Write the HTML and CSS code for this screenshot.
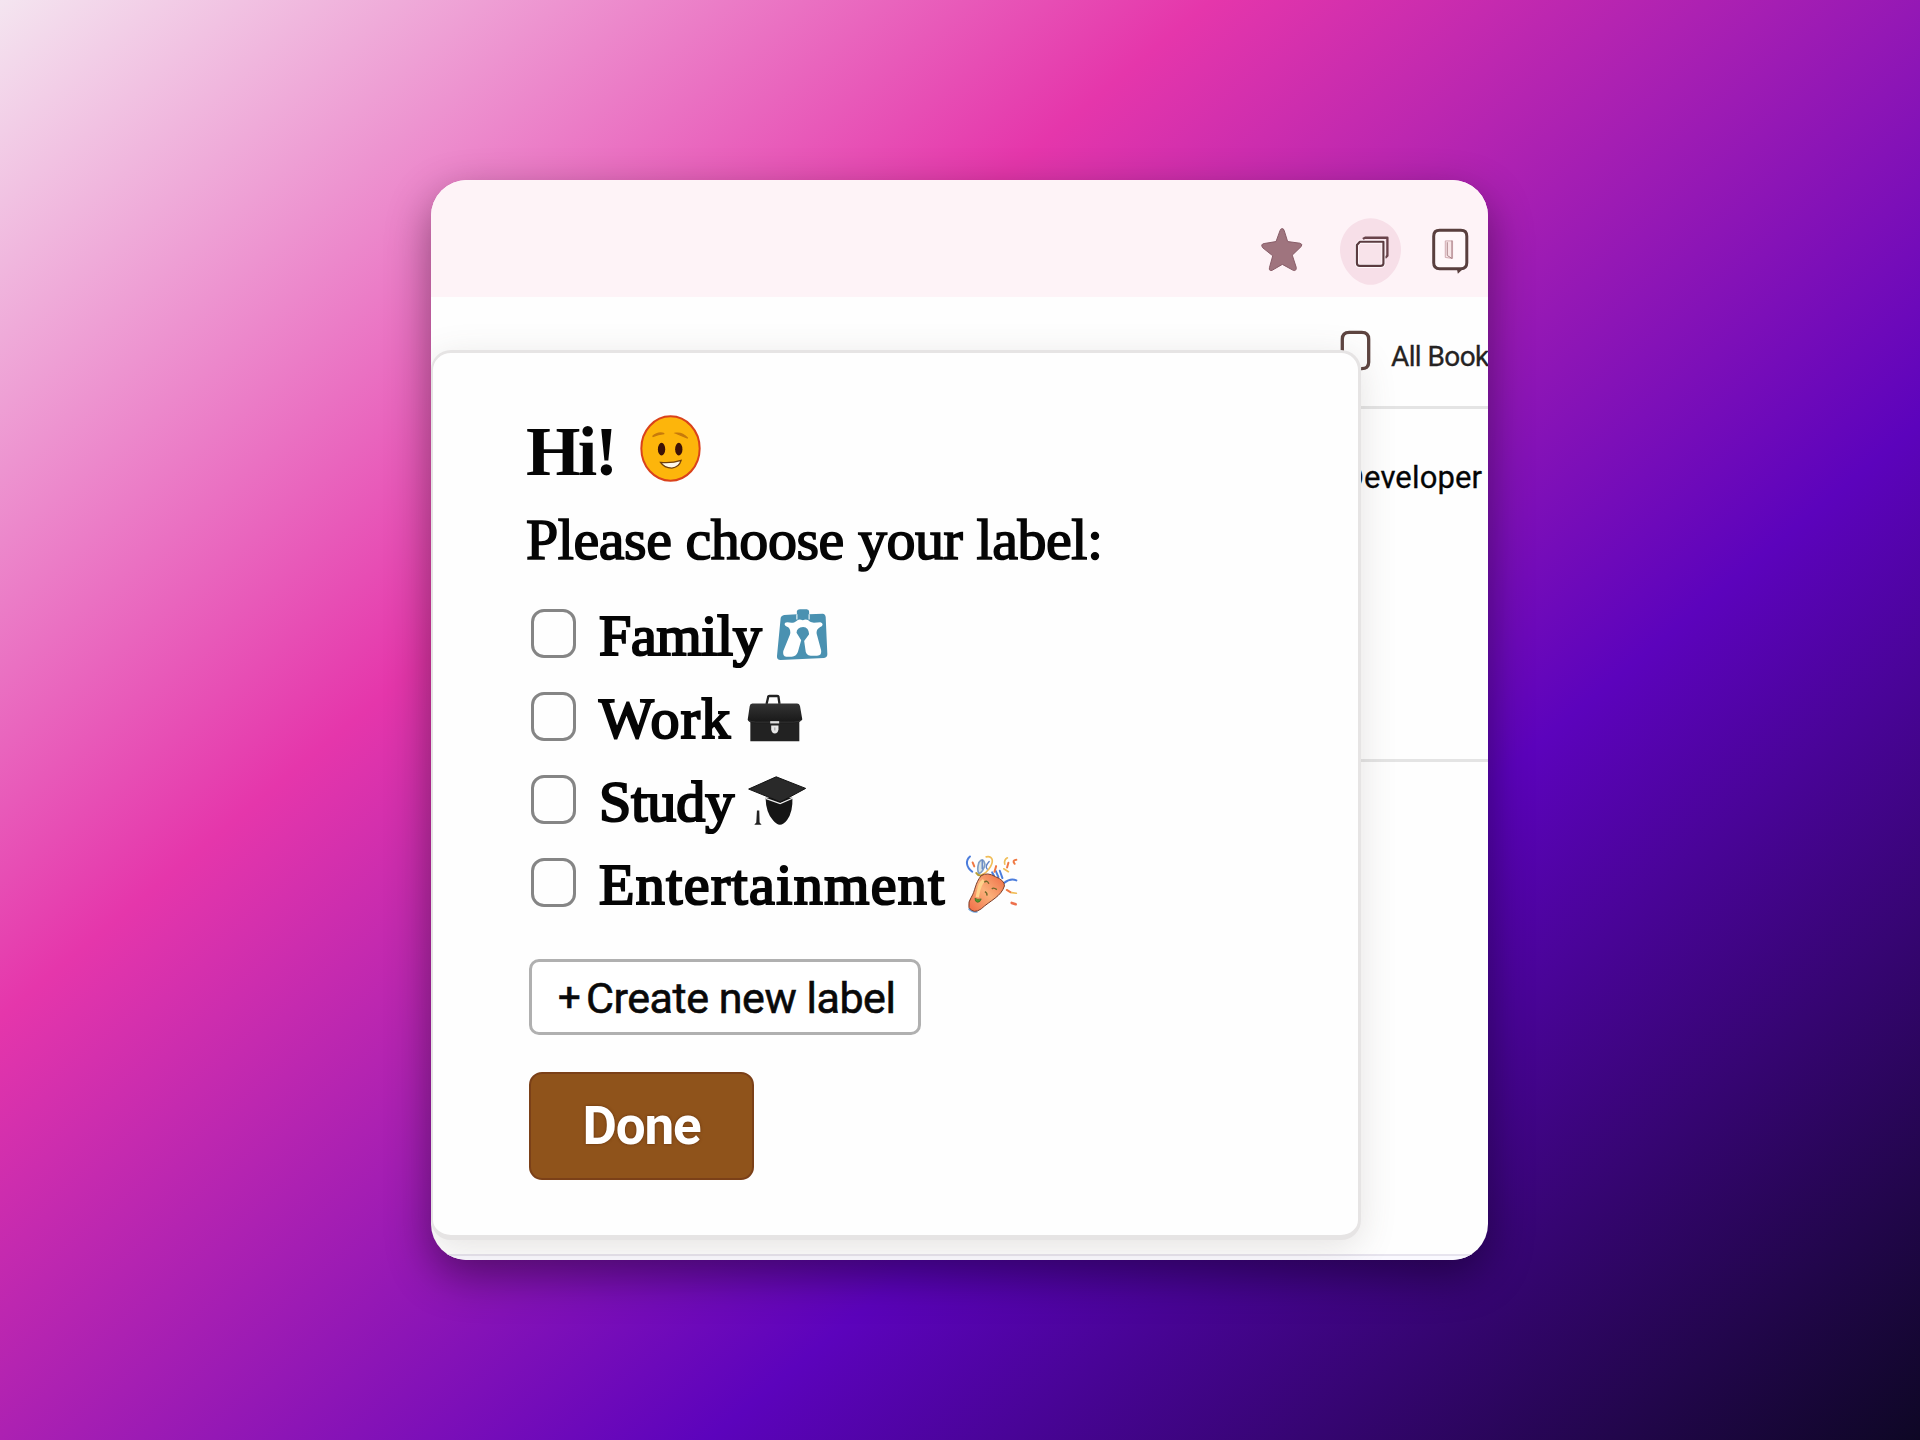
FILE: index.html
```html
<!DOCTYPE html>
<html lang="en">
<head>
<meta charset="utf-8">
<title>Choose your label</title>
<link rel="stylesheet" href="styles.css">
</head>
<body>
<main class="window">
  <header class="toolbar">
    <svg class="star" viewBox="121 172 126 136"><path d="M184 177Q189 176 191 184L201 216L238 221Q248 224 242 231L215 257L227 294Q228 306 218 303L185 285L154 303Q144 306 146 295L156 259L126 235Q118 224 130 222L166 216L178 183Q180 177 184 177Z" fill="#9f747e" stroke="#875c67" stroke-width="3"/></svg>
    <svg class="tabs" viewBox="360 145 184 201"><path d="M452 145C505 147 544 188 544 240C544 292 500 346 452 346C404 346 360 292 360 240C360 188 400 147 452 145Z" fill="#f7dfe8"/><g fill="none" stroke-linejoin="round"><path d="M429 208L436 204H503V258L496 265" stroke="#69434a" stroke-width="7"/><path d="M411 226L420 216H491V282Q490 289 482 289H420Q411 289 411 280Z" fill="#f8e3ea" stroke="#fff8fb" stroke-width="12"/><path d="M411 226L420 216H491V282Q490 289 482 289H420Q411 289 411 280Z" stroke="#5b3b40" stroke-width="6.5"/></g></svg>
    <svg class="bubble" viewBox="635 173 110 139"><path d="M658 180H722Q740 180 740 198V278L727 293L714 308V296H658Q640 296 640 278V198Q640 180 658 180Z" fill="#fff8fa"/><path d="M658 180H722Q740 180 740 198V278Q740 296 722 296H658Q640 296 640 278V198Q640 180 658 180Z" fill="none" stroke="#593f3e" stroke-width="9"/><path d="M710 296H726L738 288L713 311Z" fill="#593f3e"/><path d="M675 212H697V265L675 262Z" fill="#f8e6e8" stroke="#d1aab0" stroke-width="3"/><path d="M681 216V256L695 265V211" fill="none" stroke="#a98488" stroke-width="3"/></svg>
  </header>
  <div class="bookmarks">
    <svg class="folder" viewBox="358 480 94 124"><path d="M365 545V508Q365 487 386 487H424Q445 487 445 508V578Q445 598 422 597" fill="none" stroke="#5e4541" stroke-width="10"/></svg>
    <span class="bookmarks-text">All Book</span>
  </div>
  <div class="content"><span class="developer">Developer</span></div>
  <div class="content-lower"></div>
  <div class="bottom-edge"></div>

  <section class="popup">
    <h1 class="greeting"><span class="hi">Hi!</span>
      <svg class="face" viewBox="388 71 184 202"><ellipse cx="480" cy="172" rx="88" ry="97" fill="#fdb50b" stroke="#da421b" stroke-width="6"/><g fill="#3b1207"><ellipse cx="453" cy="174" rx="11" ry="19"/><ellipse cx="505" cy="174" rx="11" ry="19"/></g><path d="M426 136Q442 121 461 127Q443 129 426 136ZM496 126Q515 123 532 141Q512 133 496 126Z" fill="#c77a0b" stroke="#c77a0b" stroke-width="4"/><path d="M450 214Q484 217 512 208Q506 229 484 231Q461 231 450 214Z" fill="#fff9e8" stroke="#70400b" stroke-width="4"/></svg>
    </h1>
    <p class="prompt">Please choose your label:</p>
    <ul class="labels">
      <li class="label-row"><span class="box"></span><span class="name family">Family</span>
        <svg class="icon-family" viewBox="798 52 157 158"><path d="M823 72L861 70V60Q863 55 870 55H891Q898 56 898 62V70L939 68Q947 69 948 78L953 191Q953 201 943 202L812 208Q800 208 801 196L812 82Q813 74 823 72Z" fill="#4a91b1"/><path d="M861 70V86M898 70V86" stroke="#d7eaf1" stroke-width="4"/><path d="M835 109C820 104 822 94 832 94C843 96 852 97 860 90Q866 82 879 88Q892 82 900 92C909 98 920 94 932 94Q943 98 936 106C923 112 918 120 922 133L934 178Q938 196 920 195H903Q887 194 887 178L883 151L898 130Q897 109 880 108Q860 109 860 126L874 148L864 184Q858 199 844 198H829Q817 197 820 181L840 132Q844 117 835 109Z" fill="#fff"/></svg></li>
      <li class="label-row"><span class="box"></span><span class="name work">Work</span>
        <svg class="icon-work" viewBox="710 308 167 145"><defs><linearGradient id="leather" x2="0" y2="1"><stop stop-color="#343434"/><stop offset="1" stop-color="#171717"/></linearGradient></defs><path d="M768 338L773 317Q773 314 777 314H800Q804 314 804 317L807 338" fill="none" stroke="#222" stroke-width="7"/><path d="M719 386H867V451H719Z" fill="#222"/><path d="M725 337H860Q867 337 869 344L876 385Q868 396 850 396H731Q714 395 711 386L717 345Q718 337 725 337Z" fill="url(#leather)"/><path d="M714 388Q722 393 735 393H850Q866 393 873 387" fill="none" stroke="#444" stroke-width="2"/><path d="M779 390H806V397H779Z" fill="#ddd"/><path d="M782 403H804V415Q802 427 793 427Q784 427 782 415Z" fill="#e7e7e7"/><path d="M793 409V418" stroke="#999" stroke-width="3"/></svg></li>
      <li class="label-row"><span class="box"></span><span class="name study">Study</span>
        <svg class="icon-study" viewBox="713 77 175 150"><path d="M766 142H847Q849 185 831 209Q810 237 789 211Q767 187 766 142Z" fill="#151515"/><path d="M766 144L810 160L849 143" fill="none" stroke="#eee" stroke-width="4"/><path d="M715 116L798 79L887 114L811 155Z" fill="#292929" stroke="#111" stroke-width="3"/><path d="M740 181H747L748 217L754 224H732L738 217Z" fill="#222"/></svg></li>
      <li class="label-row"><span class="box"></span><span class="name fun">Entertainment</span>
        <svg class="icon-party" viewBox="165 72 163 180"><defs><linearGradient id="cone" x1="0" y1="1" x2="1" y2="0"><stop stop-color="#f06b45"/><stop offset=".5" stop-color="#fbb07a"/><stop offset="1" stop-color="#ed6842"/></linearGradient></defs><g fill="none" stroke-linecap="round"><path d="M180 79C166 91 168 111 187 125M283 159Q302 143 320 151M258 123L266 141M270 122L278 144M247 127L253 138" stroke="#4c7ddc" stroke-width="6"/><path d="M188 97L193 109M259 108L254 125M296 98L292 112M320 89Q306 91 315 101M291 180L303 187" stroke="#ef7842" stroke-width="6"/><path d="M229 80C252 75 252 98 237 117C232 125 224 130 216 134M293 83Q282 89 285 102M282 116L296 125M306 188L320 190" stroke="#f0bd58" stroke-width="5"/><path d="M207 97Q220 79 225 103Q221 125 207 131Q200 119 207 97Z" fill="#dce6e6" stroke="#809fc5" stroke-width="5"/><path d="M217 91V116M238 94Q224 109 232 117" stroke="#5d82c5" stroke-width="4"/><path d="M199 129Q205 139 217 136" stroke="#b79d34" stroke-width="6"/><path d="M306 219L318 223" stroke="#ed704c" stroke-width="8"/></g><path d="M177 235Q188 248 202 244" fill="none" stroke="#72a6df" stroke-width="8"/><path d="M214 137Q232 125 257 140Q285 151 284 168C274 200 242 211 214 237Q191 254 177 233Q174 215 184 202C196 184 195 159 214 137Z" fill="url(#cone)" stroke="#793b27" stroke-width="3"/><path d="M202 202C207 178 208 161 222 151" fill="none" stroke="#ffd28b" stroke-width="10"/><path d="M223 157Q232 149 237 161M246 177Q251 171 261 179M225 185Q233 189 231 197" fill="none" stroke="#6f6728" stroke-width="4"/><path d="M195 205Q203 211 214 207Q211 218 202 217Q195 216 195 205Z" fill="#58952c" stroke="#386a1e" stroke-width="2"/></svg></li>
    </ul>
    <button class="create"><span class="plus">+</span><span>Create new label</span></button>
    <button class="done">Done</button>
  </section>
</main>
</body>
</html>
```
FILE: styles.css
```css
* { box-sizing: border-box; }
body {
  margin: 0;
  height: 1440px;
  display: flex;
  justify-content: center;
  align-items: center;
  overflow: hidden;
  background: linear-gradient(140deg, rgb(244,229,240), rgb(229,54,171), rgb(92,3,188), rgb(14,7,37));
  font-family: Roboto, "Liberation Sans", sans-serif;
  color: #050505;
}
svg { display: block; flex: none; overflow: visible; }
.window {
  position: relative;
  display: flex;
  flex-direction: column;
  width: 1057px;
  height: 1080px;
  margin-right: 1px;
  border-radius: 36px;
  overflow: hidden;
  background: #fefefe;
  box-shadow: 0 16px 44px rgba(0,0,0,.42);
}
.toolbar {
  flex: none;
  display: flex;
  justify-content: flex-end;
  align-items: flex-start;
  height: 116.5px;
  padding: 38px 20px 0 0;
  background: #fef3f7;
}
.star { width: 42px; height: 45px; margin-top: 9px; }
.tabs { width: 61px; height: 67px; margin: 0 31px 0 37px; }
.bubble { width: 36.5px; height: 46px; margin-top: 9.5px; }
.bookmarks {
  flex: none;
  display: flex;
  height: 112px;
  padding: 33.5px 0 0 908.5px;
  border-bottom: 3px solid #e4e4e4;
}
.folder { width: 31px; height: 41px; }
.bookmarks-text {
  margin: 11px 0 0 20.5px;
  line-height: 32px;
  font-size: 28px;
  letter-spacing: -.6px;
  white-space: nowrap;
  color: #252323;
  -webkit-text-stroke: .3px #252323;
}
.content {
  flex: none;
  height: 353px;
  padding: 50px 0 0 912.5px;
  border-bottom: 3px solid #e4e4e4;
}
.developer {
  font-size: 31px;
  line-height: 37px;
  letter-spacing: .15px;
  -webkit-text-stroke: .3px #050505;
}
.content-lower { flex: 1; }
.bottom-edge {
  flex: none;
  height: 6px;
  border-top: 2px solid #e7e4ee;
  background: #faf9ff;
}
.popup {
  position: absolute;
  top: 170px;
  left: 0;
  display: flex;
  flex-direction: column;
  align-items: flex-start;
  width: 930px;
  height: 890px;
  padding: 57px 0 0 93px;
  border: solid #e6e4e4;
  border-width: 3px 3px 5px 2px;
  border-radius: 20px;
  background: #fefefe;
  box-shadow: 0 8px 36px rgba(90,75,65,.15);
}
.greeting, .prompt, .name {
  font-family: "Liberation Serif", serif;
  white-space: nowrap;
}
.greeting {
  display: flex;
  align-items: center;
  margin: 0;
  height: 80px;
}
.hi {
  width: 114px;
  padding-top: 3px;
  font-size: 70px;
  line-height: 82px;
  letter-spacing: -2.6px;
}
.face { width: 61px; height: 67px; margin-bottom: 4px; }
.prompt {
  margin: 7px 0 0;
  font-size: 58px;
  line-height: 86px;
  letter-spacing: -.45px;
  -webkit-text-stroke: 1.6px #050505;
}
.labels { list-style: none; margin: 9px 0 0; padding: 0 0 0 5px; }
.label-row { display: flex; align-items: center; height: 83px; }
.box {
  flex: none;
  width: 45px;
  height: 49px;
  border: 3px solid #858585;
  border-radius: 13px;
}
.name {
  margin-left: 23px;
  padding-top: 3px;
  font-size: 58px;
  line-height: 83px;
  -webkit-text-stroke: 2.2px #050505;
}
.family { width: 177px; letter-spacing: -.3px; }
.work { width: 148px; letter-spacing: 1.3px; }
.study { width: 149px; }
.fun { width: 366px; letter-spacing: 1.4px; }
.label-row svg { margin-top: 2px; }
.icon-family { width: 52px; height: 53px; }
.icon-work { width: 56px; height: 48px; }
.icon-study { width: 58px; height: 50px; }
.icon-party { width: 54px; height: 60px; }
.create, .done { margin-left: 3px; color: #090909; }
.create {
  display: flex;
  align-items: center;
  width: 392px;
  height: 76px;
  margin-top: 35px;
  padding: 1px 0 0 20px;
  border: 3px solid #b0b0b0;
  border-radius: 10px;
  background: #fff;
  font: 43px/70px Roboto, "Liberation Sans", sans-serif;
  letter-spacing: -.45px;
  white-space: nowrap;
  -webkit-text-stroke: .6px #090909;
}
.plus { width: 34px; font-size: 40px; }
.done {
  width: 225px;
  height: 108px;
  margin-top: 37px;
  padding: 1px 0 0;
  border: 2px solid #7b4018;
  border-radius: 13px;
  background: #8f531b;
  color: #fff;
  font: bold 53px/103px Roboto, sans-serif;
  letter-spacing: -1.2px;
  text-shadow: 0 0 3px #64300b;
}
```
